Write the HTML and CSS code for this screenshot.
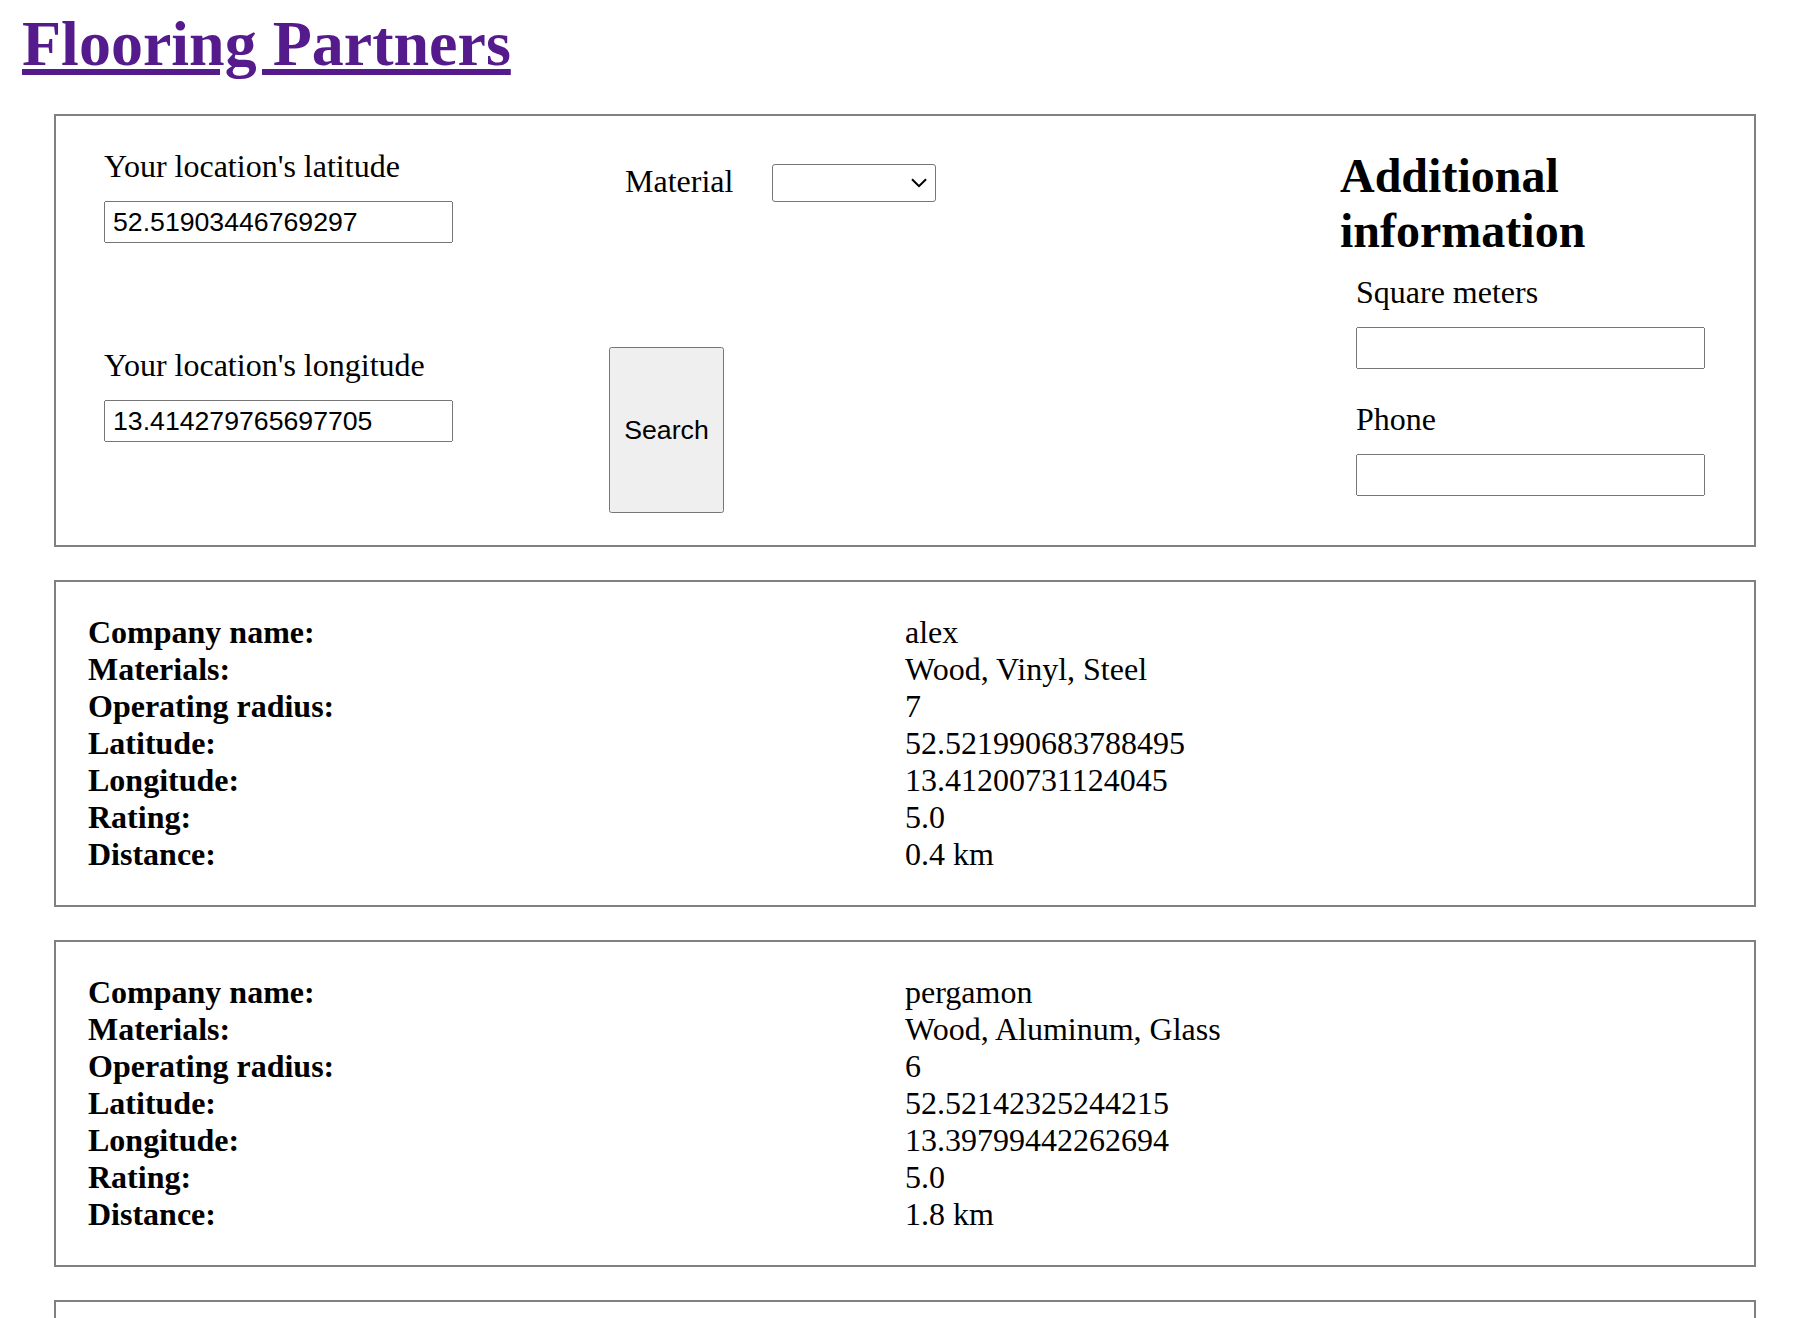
FILE: index.html
```html
<!DOCTYPE html>
<html lang="en">
<head>
<meta charset="utf-8">
<title>Flooring Partners</title>
<link rel="stylesheet" href="styles.css">
</head>
<body>
<h1 class="site-title"><a href="#" class="site-link">Flooring Partners</a></h1>

<form class="card search-card">
  <div class="col col-location">
    <div class="field field-lat">
      <label class="label" for="lat">Your location's latitude</label>
      <input class="text-input" id="lat" type="text" value="52.51903446769297">
    </div>
    <div class="field field-long">
      <label class="label" for="lng">Your location's longitude</label>
      <input class="text-input" id="lng" type="text" value="13.414279765697705">
    </div>
  </div>

  <div class="col col-material">
    <div class="material-row">
      <label class="label" for="material">Material</label>
      <div class="select-wrap">
        <select class="select" id="material">
          <option value=""></option>
        </select>
        <svg class="select-arrow" width="16" height="10" viewBox="0 0 16 10" aria-hidden="true">
          <path d="M1 1.2 L8 8.2 L15 1.2" fill="none" stroke="#000" stroke-width="2"/>
        </svg>
      </div>
    </div>
    <button type="button" class="search-btn">Search</button>
  </div>

  <div class="col col-extra">
    <h2 class="extra-title">Additional information</h2>
    <div class="field field-pad">
      <label class="label" for="sqm">Square meters</label>
      <input class="text-input" id="sqm" type="text">
    </div>
    <div class="field field-pad">
      <label class="label" for="phone">Phone</label>
      <input class="text-input" id="phone" type="text">
    </div>
  </div>
</form>

<div class="card result-card">
  <div class="result-grid">
    <span class="k">Company name:</span><span class="v">alex</span>
    <span class="k">Materials:</span><span class="v">Wood, Vinyl, Steel</span>
    <span class="k">Operating radius:</span><span class="v">7</span>
    <span class="k">Latitude:</span><span class="v">52.521990683788495</span>
    <span class="k">Longitude:</span><span class="v">13.41200731124045</span>
    <span class="k">Rating:</span><span class="v">5.0</span>
    <span class="k">Distance:</span><span class="v">0.4 km</span>
  </div>
</div>

<div class="card result-card">
  <div class="result-grid">
    <span class="k">Company name:</span><span class="v">pergamon</span>
    <span class="k">Materials:</span><span class="v">Wood, Aluminum, Glass</span>
    <span class="k">Operating radius:</span><span class="v">6</span>
    <span class="k">Latitude:</span><span class="v">52.52142325244215</span>
    <span class="k">Longitude:</span><span class="v">13.39799442262694</span>
    <span class="k">Rating:</span><span class="v">5.0</span>
    <span class="k">Distance:</span><span class="v">1.8 km</span>
  </div>
</div>

<div class="card result-card">
  <div class="result-grid">
    <span class="k">Company name:</span><span class="v">berlin floors</span>
    <span class="k">Materials:</span><span class="v">Wood, Stone</span>
    <span class="k">Operating radius:</span><span class="v">5</span>
    <span class="k">Latitude:</span><span class="v">52.5101</span>
    <span class="k">Longitude:</span><span class="v">13.3902</span>
    <span class="k">Rating:</span><span class="v">4.5</span>
    <span class="k">Distance:</span><span class="v">2.0 km</span>
  </div>
</div>
</body>
</html>
```

FILE: styles.css
```css
html, body {
  background: #ffffff;
}

body {
  margin: 0;
  padding: 7px 0 40px;
  font-family: "Liberation Serif", "Times New Roman", serif;
  font-size: 32px;
  color: #000000;
}

.site-title {
  margin: 0 0 0 22px;
  font-size: 64px;
  font-weight: bold;
  line-height: normal;
}

.site-link {
  color: #551a8b;
  text-decoration: underline;
}

.card {
  margin: 33px 38px 0 54px;
  border: 2px solid #808080;
  padding: 32px;
}

/* ---------- search form ---------- */
.search-card {
  display: grid;
  grid-template-columns: 521px 1fr 382px;
  align-items: start;
}

.label {
  display: block;
  font-size: 32px;
  line-height: normal;
}

.text-input {
  display: block;
  box-sizing: border-box;
  width: 349px;
  height: 42px;
  margin-top: 16px;
  padding: 0 7px;
  font-family: "Liberation Sans", Arial, sans-serif;
  font-size: 26.67px;
  color: #000;
}

.col-location {
  padding-left: 16px;
}

.field-long {
  margin-top: 104px;
}

.col-material {
  display: flex;
  flex-direction: column;
  align-items: flex-start;
}

.material-row {
  display: flex;
  align-items: center;
  gap: 39px;
  margin: 16px 0 0 16px;
}

.material-row .label {
  margin-top: -3px;
}

.select-wrap {
  position: relative;
  width: 164px;
  height: 38px;
}

.select {
  display: block;
  box-sizing: border-box;
  width: 164px;
  height: 38px;
  margin: 0;
  padding: 0 30px 0 6px;
  border: 1px solid #767676;
  border-radius: 3px;
  background: #ffffff;
  appearance: none;
  -webkit-appearance: none;
  font-family: "Liberation Sans", Arial, sans-serif;
  font-size: 26.67px;
  color: #000;
}

.select-arrow {
  position: absolute;
  right: 9px;
  top: 14px;
  pointer-events: none;
}

.search-btn {
  box-sizing: border-box;
  width: 115px;
  height: 166px;
  margin-top: 145px;
  font-family: "Liberation Sans", Arial, sans-serif;
  font-size: 26.67px;
  color: #000;
}

.extra-title {
  margin: 0;
  font-size: 48px;
  font-weight: bold;
  line-height: normal;
}

.field-pad {
  padding: 16px;
}

/* ---------- results ---------- */
.result-grid {
  display: grid;
  grid-template-columns: 1fr 1fr;
  line-height: normal;
}

.k {
  font-weight: bold;
}
```
